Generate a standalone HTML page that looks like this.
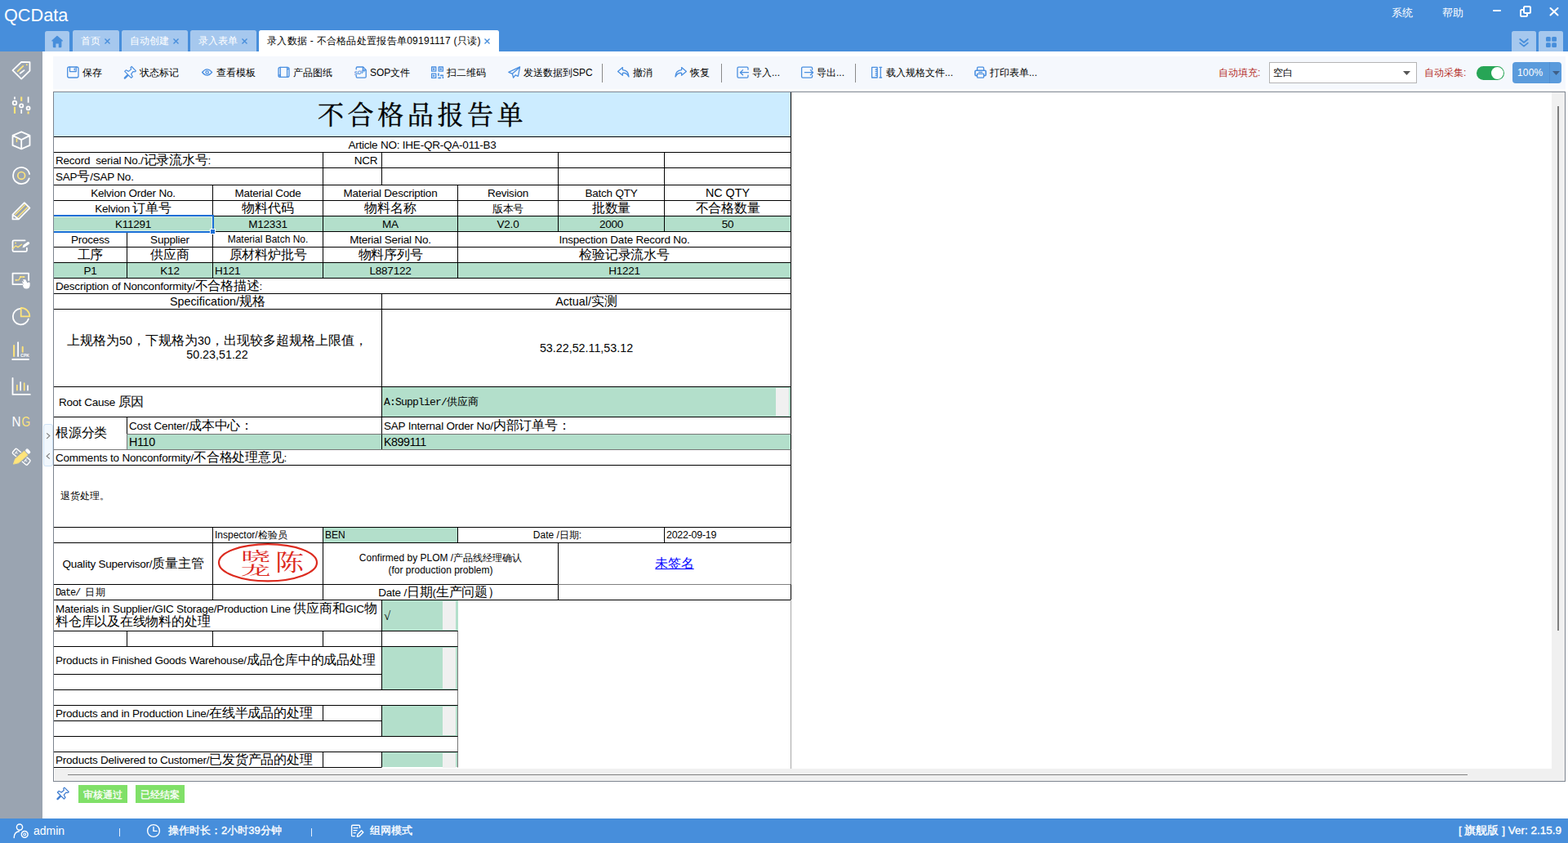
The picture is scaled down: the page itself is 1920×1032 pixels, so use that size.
<!DOCTYPE html>
<html lang="zh"><head><meta charset="utf-8"><title>QCData</title>
<style>
html,body{margin:0;padding:0;}
body{width:1920px;height:1032px;position:relative;overflow:hidden;background:#fff;font-family:"Liberation Sans",sans-serif;font-size:12px;color:#000;}
div,span,a{box-sizing:border-box;}
.abs{position:absolute;}
svg{position:absolute;overflow:visible;}
/* ---------- title bar ---------- */
#titlebar{position:absolute;left:0;top:0;width:1920px;height:63px;background:#478edb;}
#logo{position:absolute;left:5px;top:5.5px;font-size:21.7px;line-height:26px;color:#fff;white-space:nowrap;}
.menu{position:absolute;top:7px;height:18px;line-height:18px;font-size:13px;color:#fff;white-space:nowrap;}
.tab{position:absolute;top:37px;height:26px;background:#a6c8ee;border-radius:2.5px 2.5px 0 0;color:#fff;font-size:12px;line-height:26px;white-space:nowrap;overflow:hidden;}
.tab .t{position:absolute;left:10px;top:0;}
.tab.act{background:#fff;color:#000;}
.tab .x{position:absolute;top:10px;width:7px;height:7px;}
/* ---------- sidebar ---------- */
#sidebar{position:absolute;left:0;top:63px;width:52px;height:939px;background:#9aa4b1;}
#handle{position:absolute;left:53px;top:519px;width:12px;height:52px;background:#f2f8fe;border:1px solid #cfe3f6;border-radius:3px;}
/* ---------- toolbar ---------- */
#toolbar{position:absolute;left:65px;top:69px;width:1852px;height:40px;background:#f5f8fd;}
.tb{position:absolute;top:0;height:40px;line-height:41px;font-size:12px;color:#000;white-space:nowrap;}
.sep{position:absolute;top:9px;width:1px;height:23px;background:#8a8a8a;}
.red{color:#b5302a;}
/* ---------- sheet ---------- */
#view{position:absolute;left:65px;top:112px;width:1852px;height:845px;border:1px solid #7d8590;background:#fff;overflow:hidden;}
#sheet{position:absolute;left:-66px;top:-113px;width:1920px;height:1032px;font-size:13px;}
.c{position:absolute;border:1px solid #000;display:flex;align-items:center;justify-content:center;text-align:center;white-space:nowrap;overflow:hidden;font-size:13.5px;letter-spacing:-0.22px;line-height:15px;}
.c.l{justify-content:flex-start;text-align:left;padding-left:2px;}
.g{background:#b3dfcb;}
.z{font-size:16px;}
.f11{font-size:14.3px;letter-spacing:0;}
.f9{font-size:12px;letter-spacing:0;}
.mono{font-family:"Liberation Mono",monospace;}
.gb{position:absolute;background:#f0f0f0;}
/* ---------- bottom ---------- */
.btn{position:absolute;top:961px;height:22px;line-height:24px;background:#80e068;color:#fff;font-size:12px;text-align:center;white-space:nowrap;-webkit-text-stroke:0.3px #fff;}
#status{position:absolute;left:0;top:1002px;width:1920px;height:30px;background:#478edb;color:#fff;font-size:13px;line-height:30px;white-space:nowrap;}
#status .s{position:absolute;top:0;}
.c.ttl{background:#ccecff;}
#ttl{font-family:"Liberation Serif",serif;font-weight:normal;color:transparent;font-size:32px;letter-spacing:4.6px;line-height:40px;padding-left:5px;padding-top:1px;}
.c.wrap{white-space:normal;}
.i{display:block;}
.i::before{content:"\200b";}
#status .k{-webkit-text-stroke:0.35px #fff;}

</style></head>
<body>
<div id="titlebar">
  <div id="logo">QCData</div>
  <div class="menu" style="left:1704px">系统</div>
  <div class="menu" style="left:1766px">帮助</div>
  <svg style="left:1820px;top:0" width="100" height="30" viewBox="1820 0 100 30" fill="none" stroke="#fff" stroke-width="2" stroke-linecap="round" stroke-linejoin="round">
    <path d="M1829 13H1837"/>
    <rect x="1866" y="8" width="8" height="8" rx="1.5"/>
    <path d="M1866 12H1863.5Q1862 12 1862 13.5V18.5Q1862 20 1863.5 20H1868.5Q1870 20 1870 18.5V16"/>
    <path d="M1898.5 10L1907.5 18.5M1907.5 10L1898.5 18.5"/>
  </svg>
  <div class="tab" style="left:55px;top:38px;width:30px;height:25px">
    <svg style="left:7px;top:5px" width="16" height="16" viewBox="0 0 16 16"><path d="M8 0.8Q8.4 0.8 8.8 1.2L14.8 6.6Q15.4 7.4 14.4 7.6H13.4V14Q13.4 15.2 12.2 15.2H9.8V10.4H6.4V15.2H4Q2.8 15.2 2.8 14V7.6H1.8Q0.8 7.4 1.4 6.6L7.2 1.2Q7.6 0.8 8 0.8Z" fill="#478edb"/></svg>
  </div>
  <div class="tab" style="left:89px;width:57px"><span class="t">首页</span><svg class="x" style="left:39px" viewBox="0 0 7 7"><path d="M0.5 0.5L6.5 6.5M6.5 0.5L0.5 6.5" stroke="#478edb" stroke-width="1.4"/></svg></div>
  <div class="tab" style="left:149px;width:81px"><span class="t">自动创建</span><svg class="x" style="left:63px" viewBox="0 0 7 7"><path d="M0.5 0.5L6.5 6.5M6.5 0.5L0.5 6.5" stroke="#478edb" stroke-width="1.4"/></svg></div>
  <div class="tab" style="left:233px;width:81px"><span class="t">录入表单</span><svg class="x" style="left:63px" viewBox="0 0 7 7"><path d="M0.5 0.5L6.5 6.5M6.5 0.5L0.5 6.5" stroke="#478edb" stroke-width="1.4"/></svg></div>
  <div class="tab act" style="left:317px;width:294px"><span class="t" style="left:10px;letter-spacing:0.28px">录入数据 - 不合格品处置报告单09191117 (只读)</span><svg class="x" style="left:276px" viewBox="0 0 7 7"><path d="M0.5 0.5L6.5 6.5M6.5 0.5L0.5 6.5" stroke="#478edb" stroke-width="1.4"/></svg></div>
  <div class="tab" style="left:1851px;top:38px;width:30px;height:25px">
    <svg style="left:9px;top:9px" width="12" height="11" viewBox="0 0 12 11" fill="none" stroke="#478edb" stroke-width="1.8" stroke-linecap="round" stroke-linejoin="round"><path d="M1.2 1L6 5L10.8 1M1.2 5.6L6 9.6L10.8 5.6"/></svg>
  </div>
  <div class="tab" style="left:1884px;top:38px;width:30px;height:25px">
    <svg style="left:9px;top:7px" width="13" height="13" viewBox="0 0 13 13" fill="#478edb"><rect x="0" y="0" width="5.8" height="5.8" rx="1.5"/><rect x="7.2" y="0" width="5.8" height="5.8" rx="1.5"/><rect x="0" y="7.2" width="5.8" height="5.8" rx="1.5"/><rect x="7.2" y="7.2" width="5.8" height="5.8" rx="1.5"/></svg>
  </div>
</div>

<div id="sidebar">
  <svg style="left:0;top:0" width="52" height="939" viewBox="0 63 52 939" fill="none" stroke="#fff" stroke-width="1.8" stroke-linecap="round" stroke-linejoin="round">
    <!-- 1 tag -->
    <path d="M15.5 86.1L26.2 75.8L36.5 76.2V86.7L26.2 96.6Z"/>
    <circle cx="32.8" cy="79.2" r="1" fill="#ffe47a" stroke="none"/>
    <path d="M21.8 87.2L28.3 80.9" stroke="#ffe47a" stroke-width="1.8"/>
    <path d="M24.7 89.7L29.5 86.1"/>
    <!-- 2 sliders -->
    <path d="M18 118.4V121.4M26.2 134V139M34.6 118.4V125.8" stroke-width="1.7" stroke-linecap="butt"/>
    <path d="M18 130.8V139M26.2 118.4V123.8M34.6 136.4V139.6" stroke="#ffe47a" stroke-width="2.1" stroke-linecap="butt"/>
    <circle cx="18" cy="126" r="2.3"/><circle cx="26.2" cy="129.4" r="2.1"/><circle cx="34.6" cy="132.4" r="2"/>
    <!-- 3 cube -->
    <path d="M26.2 161.4L36.5 165.9V177.9L26.2 182.4L15.5 177.9V165.9ZM15.5 165.9L26.2 171.1L36.5 165.9M26.2 171.1V182.4"/>
    <path d="M20.5 169.9V173.5" stroke="#ffe47a" stroke-width="1.5"/>
    <!-- 4 target -->
    <path d="M35.7 218.4A10.1 10.1 0 1 1 36.1 213"/>
    <circle cx="26.2" cy="214.9" r="4.4" stroke="#ffe47a" stroke-width="1.7"/>
    <!-- 5 pencil -->
    <path d="M15.5 268.4V262.7L29.9 248.1L36.4 254.6L22.9 268.4ZM15.7 262.9L22.7 268.2"/>
    <path d="M18.8 262.4L30.6 250.8M21.8 265.6L33.6 253.9" stroke="#ffe47a" stroke-width="1.4"/>
    <!-- 6 chart with pen -->
    <path d="M30.6 294.3H17Q15.5 294.3 15.5 295.8V306.4Q15.5 307.9 17 307.9H31.4Q32.9 307.9 32.9 306.4V303.6"/>
    <path d="M15.9 304.2L19.2 300.9L22 302.6L26.6 299.3" stroke="#ffe47a" stroke-width="1.3"/>
    <circle cx="19" cy="297.5" r="1" fill="#ffe47a" stroke="none"/>
    <path d="M30 300.8L34.6 297.6" stroke-width="3.2"/>
    <path d="M27.4 303.2L30.6 302.4L28.8 299.9Z" fill="#fff" stroke="none"/>
    <!-- 7 screen with hand -->
    <path d="M27.4 348.1H15.5V334.7H35.1V343"/>
    <path d="M19.6 342.8H23L25.1 339H29.3" stroke="#ffe47a" stroke-width="1.3"/>
    <circle cx="19.6" cy="342.8" r="1.1" fill="#ffe47a" stroke="none"/><circle cx="25.1" cy="339" r="1.1" fill="#ffe47a" stroke="none"/><circle cx="29.3" cy="339" r="1.1" fill="#ffe47a" stroke="none"/>
    <path d="M28.6 349.2Q29 352.8 32.2 352.8Q35.8 352.8 36 349.2L36 346.6Q35.4 345.6 34.6 346.4L33.2 347.4L29.2 342.6" fill="#fff" stroke-width="1.3"/>
    <path d="M29.4 347.6L27.6 344.8M31.2 346.8L29 342.8M32.6 346.2L30.8 342.6" stroke-width="1.2"/>
    <!-- 8 pie -->
    <path d="M25 377.9A9.7 9.7 0 1 0 34.8 390.4"/>
    <path d="M25.7 376.9A10.6 10.6 0 0 1 36.3 387.4H25.7Z" stroke="#ffe47a" stroke-width="1.8"/>
    <!-- 9 bars cpk -->
    <path d="M15.2 440H35" stroke-width="1.8"/>
    <path d="M22.1 419.2V436" stroke-width="1.8"/>
    <path d="M17.1 423V436M27.7 424.8V430.8" stroke="#ffe47a" stroke-width="2"/>
    <text x="25.3" y="437.4" font-size="4.6" font-weight="bold" fill="#fff" stroke="none" font-family="Liberation Sans,sans-serif" textLength="10.6" lengthAdjust="spacingAndGlyphs">CPK</text>
    <!-- 10 bar chart -->
    <path d="M15.5 462.8V482.9H36.8" stroke-width="1.8"/>
    <path d="M25.1 467.8V477.6M34 472.2V477.6" stroke-width="1.7"/>
    <path d="M20.9 471.6V477.6M29.7 469.1V477.6" stroke="#ffe47a" stroke-width="1.7"/>
    <!-- 11 NG -->
    <text x="14.4" y="522.4" font-size="17.4" fill="#fff" stroke="none" font-family="Liberation Sans,sans-serif" textLength="11" lengthAdjust="spacingAndGlyphs">N</text>
    <text x="26.6" y="522.4" font-size="17.4" fill="#ffe47a" stroke="none" font-family="Liberation Sans,sans-serif" textLength="10.6" lengthAdjust="spacingAndGlyphs">G</text>
    <!-- 12 ruler + pencil -->
    <g transform="rotate(40 26.2 559.2)">
      <rect x="14.4" y="555.4" width="23.6" height="7.6" rx="1.6" stroke-width="1.4"/>
      <path d="M17.6 559.2H19.8M17.6 557.4V561M32.6 559.2H34.8M32.6 557.4V561" stroke-width="1" />
    </g>
    <g transform="rotate(-41 26.2 559.4)">
      <rect x="12.6" y="555" width="26.8" height="8.8" fill="#9aa4b1" stroke="none"/>
      <path d="M13.4 559.4L19 556.2H33.6V562.6H19Z" fill="#ffe47a" stroke="#ffe47a" stroke-width="0.8"/>
      <rect x="34.8" y="556" width="4" height="6.8" rx="1.6" fill="#fff" stroke="none"/>
    </g>
  </svg>
</div>
<div id="handle">
  <svg style="left:0;top:0" width="9" height="50" viewBox="54 520 9 50" fill="none" stroke="#777" stroke-width="1.1"><path d="M57.2 530.4L60.8 533.6L57.2 536.8M60.8 555.2L57.2 558.4L60.8 561.6"/></svg>
</div>

<div id="toolbar">
  <!-- coordinates inside toolbar: x = abs-65, y = abs-69 -->
  <svg style="left:0;top:0" width="1852" height="40" viewBox="65 69 1852 40" fill="none" stroke="#4a8fe0" stroke-width="1.3" stroke-linecap="round" stroke-linejoin="round">
    <!-- save -->
    <rect x="82.7" y="82" width="13.3" height="13" rx="2"/>
    <path d="M85.5 82.2V87.6H93.2V82.2M91.2 84V85.8"/>
    <!-- pin -->
    <path d="M161.2 81.5L166.5 86.8L165.2 87.9L163.2 87.5L160.6 90.6L162.3 93.8L160.7 95.4L157.2 92L153.2 96Q152 96.4 152.4 95.2L156.4 91.2L152.7 87.4L154.3 85.8L157.5 87.4L160.6 84.8L160 82.6Z" stroke-width="1.2"/>
    <!-- eye -->
    <path d="M247.6 88.5Q250.6 84.9 253.6 84.9Q256.6 84.9 259.6 88.5Q256.6 92.1 253.6 92.1Q250.6 92.1 247.6 88.5Z"/>
    <circle cx="253.6" cy="88.5" r="1.7"/>
    <!-- drawing scroll -->
    <path d="M343.3 82.4H351.6M343.3 94.4H351.6M343.3 82.4V94.4M351.6 82.4V94.4"/>
    <path d="M343.3 82.4Q341 82.4 341 84.4V92.4Q341 94.4 343.3 94.4M351.6 82.4Q354 82.4 354 84.4V92.4Q354 94.4 351.6 94.4M341 92H343.3M351.6 84.6H354"/>
    <!-- sop -->
    <path d="M436.2 84.8V83.4Q436.2 82 437.6 82H444.6L448.2 85.6V93.8Q448.2 95.2 446.8 95.2H437.6Q436.2 95.2 436.2 93.8V92.4M444.4 82.2V85.8H448"/>
    <text x="440.1" y="90.8" font-size="6.2" font-weight="bold" font-style="italic" text-anchor="middle" fill="#4a8fe0" stroke="none" transform="rotate(-10 440 88.6)" font-family="Liberation Sans,sans-serif">SOP</text>
    <!-- qr -->
    <rect x="528.6" y="82" width="5.2" height="5.2"/><rect x="537.2" y="82" width="5.2" height="5.2"/><rect x="528.6" y="90.2" width="5.2" height="5.2"/>
    <path d="M537 90V92.4M539.6 92.4H542.4M537 95.4H539.4M542.4 95.4V94.2" stroke-width="1.6"/>
    <path d="M530.4 83.8H532V85.4H530.4ZM539 83.8H540.6V85.4H539ZM530.4 92H532V93.6H530.4Z" fill="#4a8fe0" stroke-width="0.6"/>
    <!-- send -->
    <path d="M636.6 81.9L622.8 88.3L627.4 90.3L628.6 95L631.2 91.9L634.4 93.3Z"/>
    <path d="M627.4 90.3L636.2 82.4"/>
    <!-- undo -->
    <path d="M762.4 82.6L756.6 87.4L762.4 92.2V89.3Q767.4 88.8 770 94Q769.8 86.2 762.4 85.6Z"/>
    <!-- redo -->
    <path d="M834.6 82.6L840.4 87.4L834.6 92.2V89.3Q829.6 88.8 827 94Q827.2 86.2 834.6 85.6Z"/>
    <!-- import -->
    <path d="M916 85.2V83.6Q916 82.2 914.6 82.2H904.4Q903 82.2 903 83.6V93.8Q903 95.2 904.4 95.2H914.6Q916 95.2 916 93.8V92.2"/>
    <path d="M916.4 88.7H906.6M909.6 85.6L906.4 88.7L909.6 91.8"/>
    <!-- export -->
    <path d="M994.6 85.2V83.6Q994.6 82.2 993.2 82.2H983Q981.6 82.2 981.6 83.6V93.8Q981.6 95.2 983 95.2H993.2Q994.6 95.2 994.6 93.8V92.2"/>
    <path d="M985.4 88.7H995.4M992.4 85.6L995.6 88.7L992.4 91.8"/>
    <!-- load spec -->
    <path d="M1067.6 82.4H1074.2V95H1067.6ZM1072.2 85H1074M1072.2 87.4H1074M1072.2 89.8H1074M1072.2 92.2H1074M1077 82.4H1079.6M1077 95H1079.6M1078.3 82.4V95"/>
    <!-- print -->
    <path d="M1196.6 86V83.4Q1196.6 82.2 1197.8 82.2H1203.4Q1204.6 82.2 1204.6 83.4V86"/>
    <path d="M1196.4 92.6H1195.4Q1194 92.6 1194 91.2V87.6Q1194 86.2 1195.4 86.2H1205.8Q1207.2 86.2 1207.2 87.6V91.2Q1207.2 92.6 1205.8 92.6H1204.8" stroke-width="1.6"/>
    <path d="M1196.6 90.4H1204.6V94.2Q1204.6 95.2 1203.6 95.2H1197.6Q1196.6 95.2 1196.6 94.2ZM1198.6 88.4H1202.6"/>
  </svg>
  <div class="tb" style="left:36px">保存</div>
  <div class="tb" style="left:106px">状态标记</div>
  <div class="tb" style="left:200px">查看模板</div>
  <div class="tb" style="left:294px">产品图纸</div>
  <div class="tb" style="left:388px">SOP文件</div>
  <div class="tb" style="left:482px">扫二维码</div>
  <div class="tb" style="left:576px">发送数据到SPC</div>
  <div class="sep" style="left:672px"></div>
  <div class="tb" style="left:710px">撤消</div>
  <div class="tb" style="left:780px">恢复</div>
  <div class="sep" style="left:818px"></div>
  <div class="tb" style="left:856px">导入...</div>
  <div class="tb" style="left:935px">导出...</div>
  <div class="sep" style="left:982px"></div>
  <div class="tb" style="left:1020px">载入规格文件...</div>
  <div class="tb" style="left:1147px">打印表单...</div>
  <div class="tb red" style="left:1427px">自动填充:</div>
  <div class="abs" style="left:1489px;top:7px;width:181px;height:26px;background:#fff;border:1px solid #b4b4b4;"></div>
  <div class="tb" style="left:1494px">空白</div>
  <svg style="left:1653px;top:18px" width="9" height="5" viewBox="0 0 9 5"><path d="M0 0H9L4.5 5Z" fill="#555"/></svg>
  <div class="tb red" style="left:1679px">自动采集:</div>
  <div class="abs" style="left:1743px;top:12px;width:34px;height:17px;border-radius:9px;background:#27a556;"></div>
  <div class="abs" style="left:1760.5px;top:13px;width:15px;height:15px;border-radius:8px;background:#fff;"></div>
  <div class="abs" style="left:1787px;top:7px;width:60px;height:26px;border-radius:4px;background:#5a9bdc;"></div>
  <div class="abs" style="left:1832px;top:7px;width:1px;height:26px;background:#5390d2;"></div>
  <div class="tb" style="left:1793px;color:#fff;font-size:12px;letter-spacing:0.2px">100%</div>
  <svg style="left:1835.5px;top:17.5px" width="9" height="5" viewBox="0 0 9 5"><path d="M0 0H9L4.5 5Z" fill="#3f5f86"/></svg>
</div>

<div id="view"><div id="sheet">
<div class="c ttl" style="left:65px;top:112px;width:904px;height:56px;"><span class="i"><span id="ttl">不合格品报告单</span></span></div>
<svg style="left:380px;top:114px" width="272" height="52" viewBox="380 114 272 52" role="img" aria-label="不合格品报告单"><text x="389" y="152" font-size="32" letter-spacing="4.6" fill="#000" stroke="#000" stroke-width="0.4" font-family="'Liberation Serif','Noto Serif CJK SC',serif">不合格品报告单</text></svg>
<div class="c " style="left:65px;top:167px;width:904px;height:20px;"><span class="i">Article NO: IHE-QR-QA-011-B3</span></div>
<div class="c l" style="left:65px;top:186px;width:331px;height:20px;"><span class="i">Record&nbsp; serial No./<span class="z">记录流水号</span>:</span></div>
<div class="c " style="left:395px;top:186px;width:73px;height:20px;padding-left:33px"><span class="i">NCR</span></div>
<div class="c " style="left:467px;top:186px;width:217px;height:20px;"></div>
<div class="c " style="left:683px;top:186px;width:131px;height:20px;"></div>
<div class="c " style="left:813px;top:186px;width:156px;height:20px;"></div>
<div class="c l" style="left:65px;top:205px;width:331px;height:22px;"><span class="i">SAP<span class="z">号</span>/SAP No.</span></div>
<div class="c " style="left:395px;top:205px;width:73px;height:22px;"></div>
<div class="c " style="left:467px;top:205px;width:217px;height:22px;"></div>
<div class="c " style="left:683px;top:205px;width:131px;height:22px;"></div>
<div class="c " style="left:813px;top:205px;width:156px;height:22px;"></div>
<div class="c " style="left:65px;top:226px;width:196px;height:20px;"><span class="i">Kelvion Order No.</span></div>
<div class="c " style="left:260px;top:226px;width:136px;height:20px;"><span class="i">Material Code</span></div>
<div class="c " style="left:395px;top:226px;width:166px;height:20px;"><span class="i">Material Description</span></div>
<div class="c " style="left:560px;top:226px;width:124px;height:20px;"><span class="i">Revision</span></div>
<div class="c " style="left:683px;top:226px;width:131px;height:20px;"><span class="i">Batch QTY</span></div>
<div class="c " style="left:813px;top:226px;width:156px;height:20px;"><span class="i"><span class="f11">NC QTY</span></span></div>
<div class="c " style="left:65px;top:245px;width:196px;height:20px;"><span class="i">Kelvion <span class="z">订单号</span></span></div>
<div class="c " style="left:260px;top:245px;width:136px;height:20px;"><span class="i"><span class="z">物料代码</span></span></div>
<div class="c " style="left:395px;top:245px;width:166px;height:20px;"><span class="i"><span class="z">物料名称</span></span></div>
<div class="c " style="left:560px;top:245px;width:124px;height:20px;"><span class="i"><span style="font-size:13px">版本号</span></span></div>
<div class="c " style="left:683px;top:245px;width:131px;height:20px;"><span class="i"><span class="z">批数量</span></span></div>
<div class="c " style="left:813px;top:245px;width:156px;height:20px;"><span class="i"><span class="z">不合格数量</span></span></div>
<div class="c g" style="left:65px;top:264px;width:196px;height:20px;"><span class="i">K11291</span></div>
<div class="c g" style="left:260px;top:264px;width:136px;height:20px;"><span class="i">M12331</span></div>
<div class="c g" style="left:395px;top:264px;width:166px;height:20px;"><span class="i">MA</span></div>
<div class="c g" style="left:560px;top:264px;width:124px;height:20px;"><span class="i">V2.0</span></div>
<div class="c g" style="left:683px;top:264px;width:131px;height:20px;"><span class="i">2000</span></div>
<div class="c g" style="left:813px;top:264px;width:156px;height:20px;"><span class="i">50</span></div>
<div class="c " style="left:65px;top:283px;width:91px;height:20px;"><span class="i">Process</span></div>
<div class="c " style="left:155px;top:283px;width:106px;height:20px;"><span class="i">Supplier</span></div>
<div class="c " style="left:260px;top:283px;width:136px;height:20px;"><span class="i"><span class="f9">Material Batch No.</span></span></div>
<div class="c " style="left:395px;top:283px;width:166px;height:20px;"><span class="i">Mterial Serial No.</span></div>
<div class="c " style="left:560px;top:283px;width:409px;height:20px;"><span class="i">Inspection Date Record No.</span></div>
<div class="c " style="left:65px;top:302px;width:91px;height:20px;"><span class="i"><span class="z">工序</span></span></div>
<div class="c " style="left:155px;top:302px;width:106px;height:20px;"><span class="i"><span class="z">供应商</span></span></div>
<div class="c " style="left:260px;top:302px;width:136px;height:20px;"><span class="i"><span class="z">原材料炉批号</span></span></div>
<div class="c " style="left:395px;top:302px;width:166px;height:20px;"><span class="i"><span class="z">物料序列号</span></span></div>
<div class="c " style="left:560px;top:302px;width:409px;height:20px;"><span class="i"><span class="z">检验记录流水号</span></span></div>
<div class="c g" style="left:65px;top:321px;width:91px;height:20px;"><span class="i">P1</span></div>
<div class="c g" style="left:155px;top:321px;width:106px;height:20px;"><span class="i">K12</span></div>
<div class="c g l" style="left:260px;top:321px;width:136px;height:20px;"><span class="i">H121</span></div>
<div class="c g" style="left:395px;top:321px;width:166px;height:20px;"><span class="i">L887122</span></div>
<div class="c g" style="left:560px;top:321px;width:409px;height:20px;"><span class="i">H1221</span></div>
<div class="c l" style="left:65px;top:340px;width:904px;height:20px;"><span class="i">Description of Nonconformity/<span class="z">不合格描述</span>:</span></div>
<div class="c f11" style="left:65px;top:359px;width:403px;height:20px;"><span class="i">Specification/<span class="z">规格</span></span></div>
<div class="c f11" style="left:467px;top:359px;width:502px;height:20px;"><span class="i">Actual/<span class="z">实测</span></span></div>
<div class="c f11 wrap" style="left:65px;top:378px;width:403px;height:96px;line-height:17.5px;padding-right:1px;padding-bottom:1px"><span class="i"><span class="z">上规格为</span>50<span class="z">，下规格为</span>30<span class="z">，出现较多超规格上限值，</span><br>50.23,51.22</span></div>
<div class="c f11" style="left:467px;top:378px;width:502px;height:96px;"><span class="i">53.22,52.11,53.12</span></div>
<div class="c l" style="left:65px;top:473px;width:403px;height:38px;padding-left:6px;padding-bottom:1px"><span class="i">Root Cause <span class="z">原因</span></span></div>
<div class="c g l" style="left:467px;top:473px;width:502px;height:38px;"><span class="i"><span class="mono" style="font-size:13px;letter-spacing:-0.8px">A:Supplier/</span><span style="font-size:13px">供应商</span></span></div>
<div class="gb" style="left:950px;top:475px;width:16px;height:34px"></div>
<div class="c l" style="left:65px;top:510px;width:91px;height:41px;padding-bottom:2px;border-bottom-color:#777"><span class="i"><span class="z">根源分类</span></span></div>
<div class="c l" style="left:155px;top:510px;width:313px;height:22px;"><span class="i">Cost Center/<span class="z">成本中心：</span></span></div>
<div class="c l" style="left:467px;top:510px;width:502px;height:22px;"><span class="i">SAP Internal Order No/<span class="z">内部订单号：</span></span></div>
<div class="c g l f11" style="left:155px;top:531px;width:313px;height:20px;letter-spacing:-0.3px;border-color:#777 #000 #777 #777"><span class="i">H110</span></div>
<div class="c g l f11" style="left:467px;top:531px;width:502px;height:20px;letter-spacing:-0.5px;border-color:#777 #000 #777 #000"><span class="i">K899111</span></div>
<div class="c l" style="left:65px;top:550px;width:904px;height:20px;border-top-color:#777"><span class="i">Comments to Nonconformity/<span class="z">不合格处理意见</span>:</span></div>
<div class="c l f9" style="left:65px;top:569px;width:904px;height:77px;padding-left:8px;"><span class="i">退货处理。</span></div>
<div class="c " style="left:65px;top:645px;width:196px;height:20px;"></div>
<div class="c l f9" style="left:260px;top:645px;width:136px;height:20px;"><span class="i">Inspector/检验员</span></div>
<div class="c g l f9" style="left:395px;top:645px;width:166px;height:20px;"><span class="i">BEN</span></div>
<div class="c f9" style="left:560px;top:645px;width:254px;height:20px;padding-right:9px"><span class="i">Date /日期:</span></div>
<div class="c l" style="left:813px;top:645px;width:156px;height:20px;font-size:12.4px"><span class="i">2022-09-19</span></div>
<div class="c " style="left:65px;top:664px;width:196px;height:52px;"><span class="i">Quality Supervisor/<span class="z">质量主管</span></span></div>
<div class="c " style="left:260px;top:664px;width:136px;height:52px;"></div>
<div class="c f9 wrap" style="left:395px;top:664px;width:289px;height:52px;line-height:15px;padding-top:2px"><span class="i">Confirmed by PLOM /产品线经理确认<br>(for production problem)</span></div>
<div class="c " style="left:683px;top:664px;width:286px;height:52px;border-color:#000 #808080 #808080 #000"><span class="i"><a class="z" style="color:#0000ff;text-decoration:underline">未签名</a></span></div>
<div class="c l" style="left:65px;top:715px;width:196px;height:20px;"><span class="i"><span class="mono" style="font-size:12px;letter-spacing:-1.2px">Date/</span><span style="font-size:12px;letter-spacing:1px;padding-left:6px">日期</span></span></div>
<div class="c " style="left:260px;top:715px;width:136px;height:20px;"></div>
<div class="c " style="left:395px;top:715px;width:289px;height:20px;padding-right:3px"><span class="i">Date /<span class="z">日期</span>(<span class="z">生产问题）</span></span></div>
<div class="c " style="left:683px;top:715px;width:286px;height:20px;border-top-color:#808080"></div>
<div class="c l wrap" style="left:65px;top:734px;width:403px;height:39px;line-height:15px;padding-bottom:2px"><span class="i">Materials in Supplier/GIC Storage/Production Line <span class="z">供应商和</span>GIC<span class="z">物</span><br><span class="z">料仓库以及在线物料的处理</span></span></div>
<div class="abs g" style="left:468px;top:735px;width:93px;height:37px"></div>
<div class="gb" style="left:542px;top:736px;width:16px;height:35px"></div>
<div class="abs" style="left:470px;top:746px;font-size:15px;line-height:16px;font-family:'Liberation Serif',serif">√</div>
<div class="c " style="left:65px;top:772px;width:91px;height:20px;"></div>
<div class="c " style="left:155px;top:772px;width:106px;height:20px;"></div>
<div class="c " style="left:260px;top:772px;width:136px;height:20px;"></div>
<div class="c " style="left:395px;top:772px;width:73px;height:20px;"></div>
<div class="c " style="left:467px;top:772px;width:94px;height:20px;border-right-color:#777"></div>
<div class="c l" style="left:65px;top:791px;width:403px;height:35px;padding-bottom:2px"><span class="i">Products in Finished Goods Warehouse/<span class="z">成品仓库中的成品处理</span></span></div>
<div class="c g" style="left:467px;top:791px;width:94px;height:54px;border-right-color:#777"></div>
<div class="gb" style="left:542px;top:793px;width:16px;height:50px"></div>
<div class="c " style="left:65px;top:825px;width:403px;height:20px;"></div>
<div class="c " style="left:65px;top:844px;width:496px;height:20px;border-right-color:#777"></div>
<div class="c l" style="left:65px;top:863px;width:331px;height:20px;"><span class="i">Products and in Production Line/<span class="z">在线半成品的处理</span></span></div>
<div class="c " style="left:395px;top:863px;width:73px;height:20px;"></div>
<div class="c g" style="left:467px;top:863px;width:94px;height:39px;border-right-color:#777"></div>
<div class="gb" style="left:542px;top:865px;width:16px;height:35px"></div>
<div class="c " style="left:65px;top:882px;width:403px;height:20px;"></div>
<div class="c " style="left:65px;top:901px;width:496px;height:20px;border-right-color:#777"></div>
<div class="c l" style="left:65px;top:920px;width:331px;height:20px;"><span class="i">Products Delivered to Customer/<span class="z">已发货产品的处理</span></span></div>
<div class="c " style="left:395px;top:920px;width:73px;height:20px;"></div>
<div class="c g" style="left:467px;top:920px;width:94px;height:20px;border-right-color:#777;border-bottom-color:#fff"></div>
<div class="gb" style="left:542px;top:922px;width:16px;height:18px"></div>
<div class="abs" style="left:968px;top:734px;width:1px;height:230px;background:#a8a8a8"></div>
<div class="abs" style="left:64px;top:263px;width:198px;height:22px;border:2px solid #1a6fd6;border-left-width:1px;box-shadow:inset 0 0 0 1px rgba(255,255,255,.6)"></div>
<div class="abs" style="left:257px;top:280px;width:7px;height:7px;background:#1a6fd6;border:1px solid #fff"></div>
<svg style="left:262px;top:665px" width="132" height="49" viewBox="262 665 132 49">
<ellipse cx="328" cy="688.8" rx="60" ry="22.6" fill="none" stroke="#dc2a1e" stroke-width="2.2"/>
<title>陈晓龙</title>
<text x="313" y="686.5" font-size="15.5" text-anchor="middle" textLength="36" lengthAdjust="spacingAndGlyphs" fill="#dc2a1e" font-family="'Liberation Serif','Noto Serif CJK SC',serif">晓</text>
<text x="313" y="703.5" font-size="15.5" text-anchor="middle" textLength="37" lengthAdjust="spacingAndGlyphs" fill="#dc2a1e" font-family="'Liberation Serif','Noto Serif CJK SC',serif">龙</text>
<text x="354.5" y="699" font-size="28" text-anchor="middle" textLength="35" lengthAdjust="spacingAndGlyphs" fill="#dc2a1e" font-family="'Liberation Serif','Noto Serif CJK SC',serif">陈</text>
</svg>
</div>
<div class="abs" style="left:1834px;top:0;width:16px;height:843px;background:#f0f0f0"></div>
<div class="abs" style="left:1px;top:828px;width:1849px;height:15px;background:#f0f0f0"></div>
<div class="abs" style="left:1841px;top:17px;width:2px;height:642px;background:#7f7f7f"></div>
<div class="abs" style="left:17px;top:835px;width:1714px;height:1px;background:#808080"></div>
</div>

<svg style="left:68px;top:962px" width="19" height="19" viewBox="150.3 79.4 19 19" fill="none" stroke="#3f7dd0" stroke-width="1.25" stroke-linecap="round" stroke-linejoin="round">
  <path d="M161.2 81.5L166.5 86.8L165.2 87.9L163.2 87.5L160.6 90.6L162.3 93.8L160.7 95.4L157.2 92L153.2 96Q152 96.4 152.4 95.2L156.4 91.2L152.7 87.4L154.3 85.8L157.5 87.4L160.6 84.8L160 82.6Z"/>
</svg>
<div class="btn" style="left:96px;width:60px">审核通过</div>
<div class="btn" style="left:166px;width:60px">已经结案</div>
<div id="status">
  <svg style="left:0;top:0" width="520" height="30" viewBox="0 1002 520 30" fill="none" stroke="#fff" stroke-width="1.4" stroke-linecap="round" stroke-linejoin="round">
    <!-- user -->
    <circle cx="24" cy="1012.6" r="3.6"/>
    <path d="M17.2 1025.6Q17.4 1018.4 23.4 1017.8"/>
    <circle cx="30.2" cy="1021.4" r="3.9" stroke-width="1.5" stroke-dasharray="2.2 0.85"/>
    <circle cx="30.2" cy="1021.4" r="1.4" stroke-width="1.1"/>
    <!-- clock -->
    <circle cx="188" cy="1017" r="7.4"/>
    <path d="M188 1012.4V1017.4H192"/>
    <!-- net -->
    <path d="M440.6 1013.4V1011.4Q440.6 1010.2 439.4 1010.2H431.8Q430.6 1010.2 430.6 1011.4V1022.4Q430.6 1023.6 431.8 1023.6H434.4M433 1013.6H438M433 1016.6H437M433 1019.6H435.4"/>
    <path d="M437.4 1024.2L438 1021.4L442.6 1016.8L444.8 1019L440.2 1023.6Z"/>
  </svg>
  <div class="s" style="left:41px;font-size:14px">admin</div>
  <div class="abs" style="left:146px;top:12px;width:1px;height:10px;background:#e8f0fb"></div>
  <div class="s k" style="left:206px">操作时长：2小时39分钟</div>
  <div class="abs" style="left:381px;top:12px;width:1px;height:10px;background:#e8f0fb"></div>
  <div class="s k" style="left:453px">组网模式</div>
  <div class="s k" style="right:8px;font-size:13.5px">[ 旗舰版 ] Ver: 2.15.9</div>
</div>

</body></html>
